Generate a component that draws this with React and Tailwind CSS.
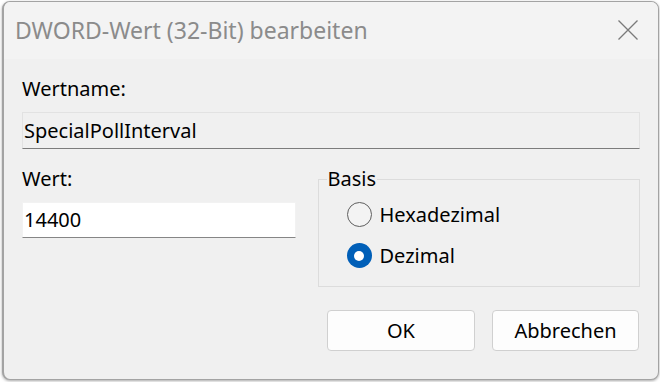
const font = { fontFamily: '"Noto Sans", "Open Sans", sans-serif' };

const Radio = ({ checked, label }) => (
  <label className="flex items-center h-[41px] gap-[8px]">
    {checked ? (
      <span className="flex items-center justify-center w-[25px] h-[25px] rounded-full bg-[#005fb8]">
        <span className="w-[10px] h-[10px] rounded-full bg-white" />
      </span>
    ) : (
      <span className="w-[25px] h-[25px] rounded-full border border-[#5f5f5f] bg-[#f3f3f3]" />
    )}
    <span className="text-[20px] leading-[24px] text-black">{label}</span>
  </label>
);

export default function App() {
  return (
    <div className="w-[660px] h-[382px] bg-white overflow-hidden" style={font}>
      <div className="ml-[2px] mt-[1px] w-[657px] h-[379px] flex flex-col rounded-[8px] border border-[#a3a3a3] border-l-2 overflow-hidden bg-[#f0f0f0] shadow-[0_1px_3px_rgba(0,0,0,0.35)]">
        {/* title bar */}
        <div className="flex items-center justify-between h-[57px] shrink-0 bg-[#f3f3f3] pl-[11px] pr-[20px]">
          <span className="text-[23px] leading-[28px] text-[#8b8b8b] -mt-[2px]">
            DWORD-Wert (32-Bit) bearbeiten
          </span>
          <svg width="20" height="20" viewBox="0 0 20 20" className="-mt-[2px]">
            <path d="M0.5 0.5L19.5 19.5M19.5 0.5L0.5 19.5" stroke="#7a7a7a" strokeWidth="1.3" fill="none" />
          </svg>
        </div>

        <div className="flex flex-col px-[18px] pt-[18px]">
          <div className="text-[20px] leading-[24px] text-black">Wertname:</div>
          <div className="mt-[11px] h-[37px] flex items-center px-[1px] bg-[#f0f0f0] border border-[#e2e2e2] border-b-[#7c7c7c] text-[20px] text-black">
            SpecialPollInterval
          </div>

          <div className="flex mt-[18px] gap-[22px]">
            <div className="w-[274px] flex flex-col">
              <div className="text-[20px] leading-[24px] text-black">Wert:</div>
              <div className="mt-[11px] h-[36px] flex items-center px-[1px] bg-white border border-[#f2f2f2] border-b-[#868686] text-[20px] text-black">
                14400
              </div>
            </div>

            <fieldset className="w-[323px] h-[120px] border border-[#dcdcdc] pl-[28px] pt-[3px] m-0">
              <legend className="-ml-[20px] px-[1px] text-[20px] leading-[24px] text-black">Basis</legend>
              <Radio label="Hexadezimal" />
              <Radio checked label="Dezimal" />
            </fieldset>
          </div>

          <div className="flex justify-end gap-[17px] mt-[23px] pr-[1px]">
            <button className="w-[148px] h-[41px] bg-[#fdfdfd] border border-[#d0d0d0] rounded-[4px] text-[20px] text-black">
              OK
            </button>
            <button className="w-[147px] h-[41px] bg-[#fdfdfd] border border-[#d0d0d0] rounded-[4px] text-[20px] text-black">
              Abbrechen
            </button>
          </div>
        </div>
      </div>
    </div>
  );
}
